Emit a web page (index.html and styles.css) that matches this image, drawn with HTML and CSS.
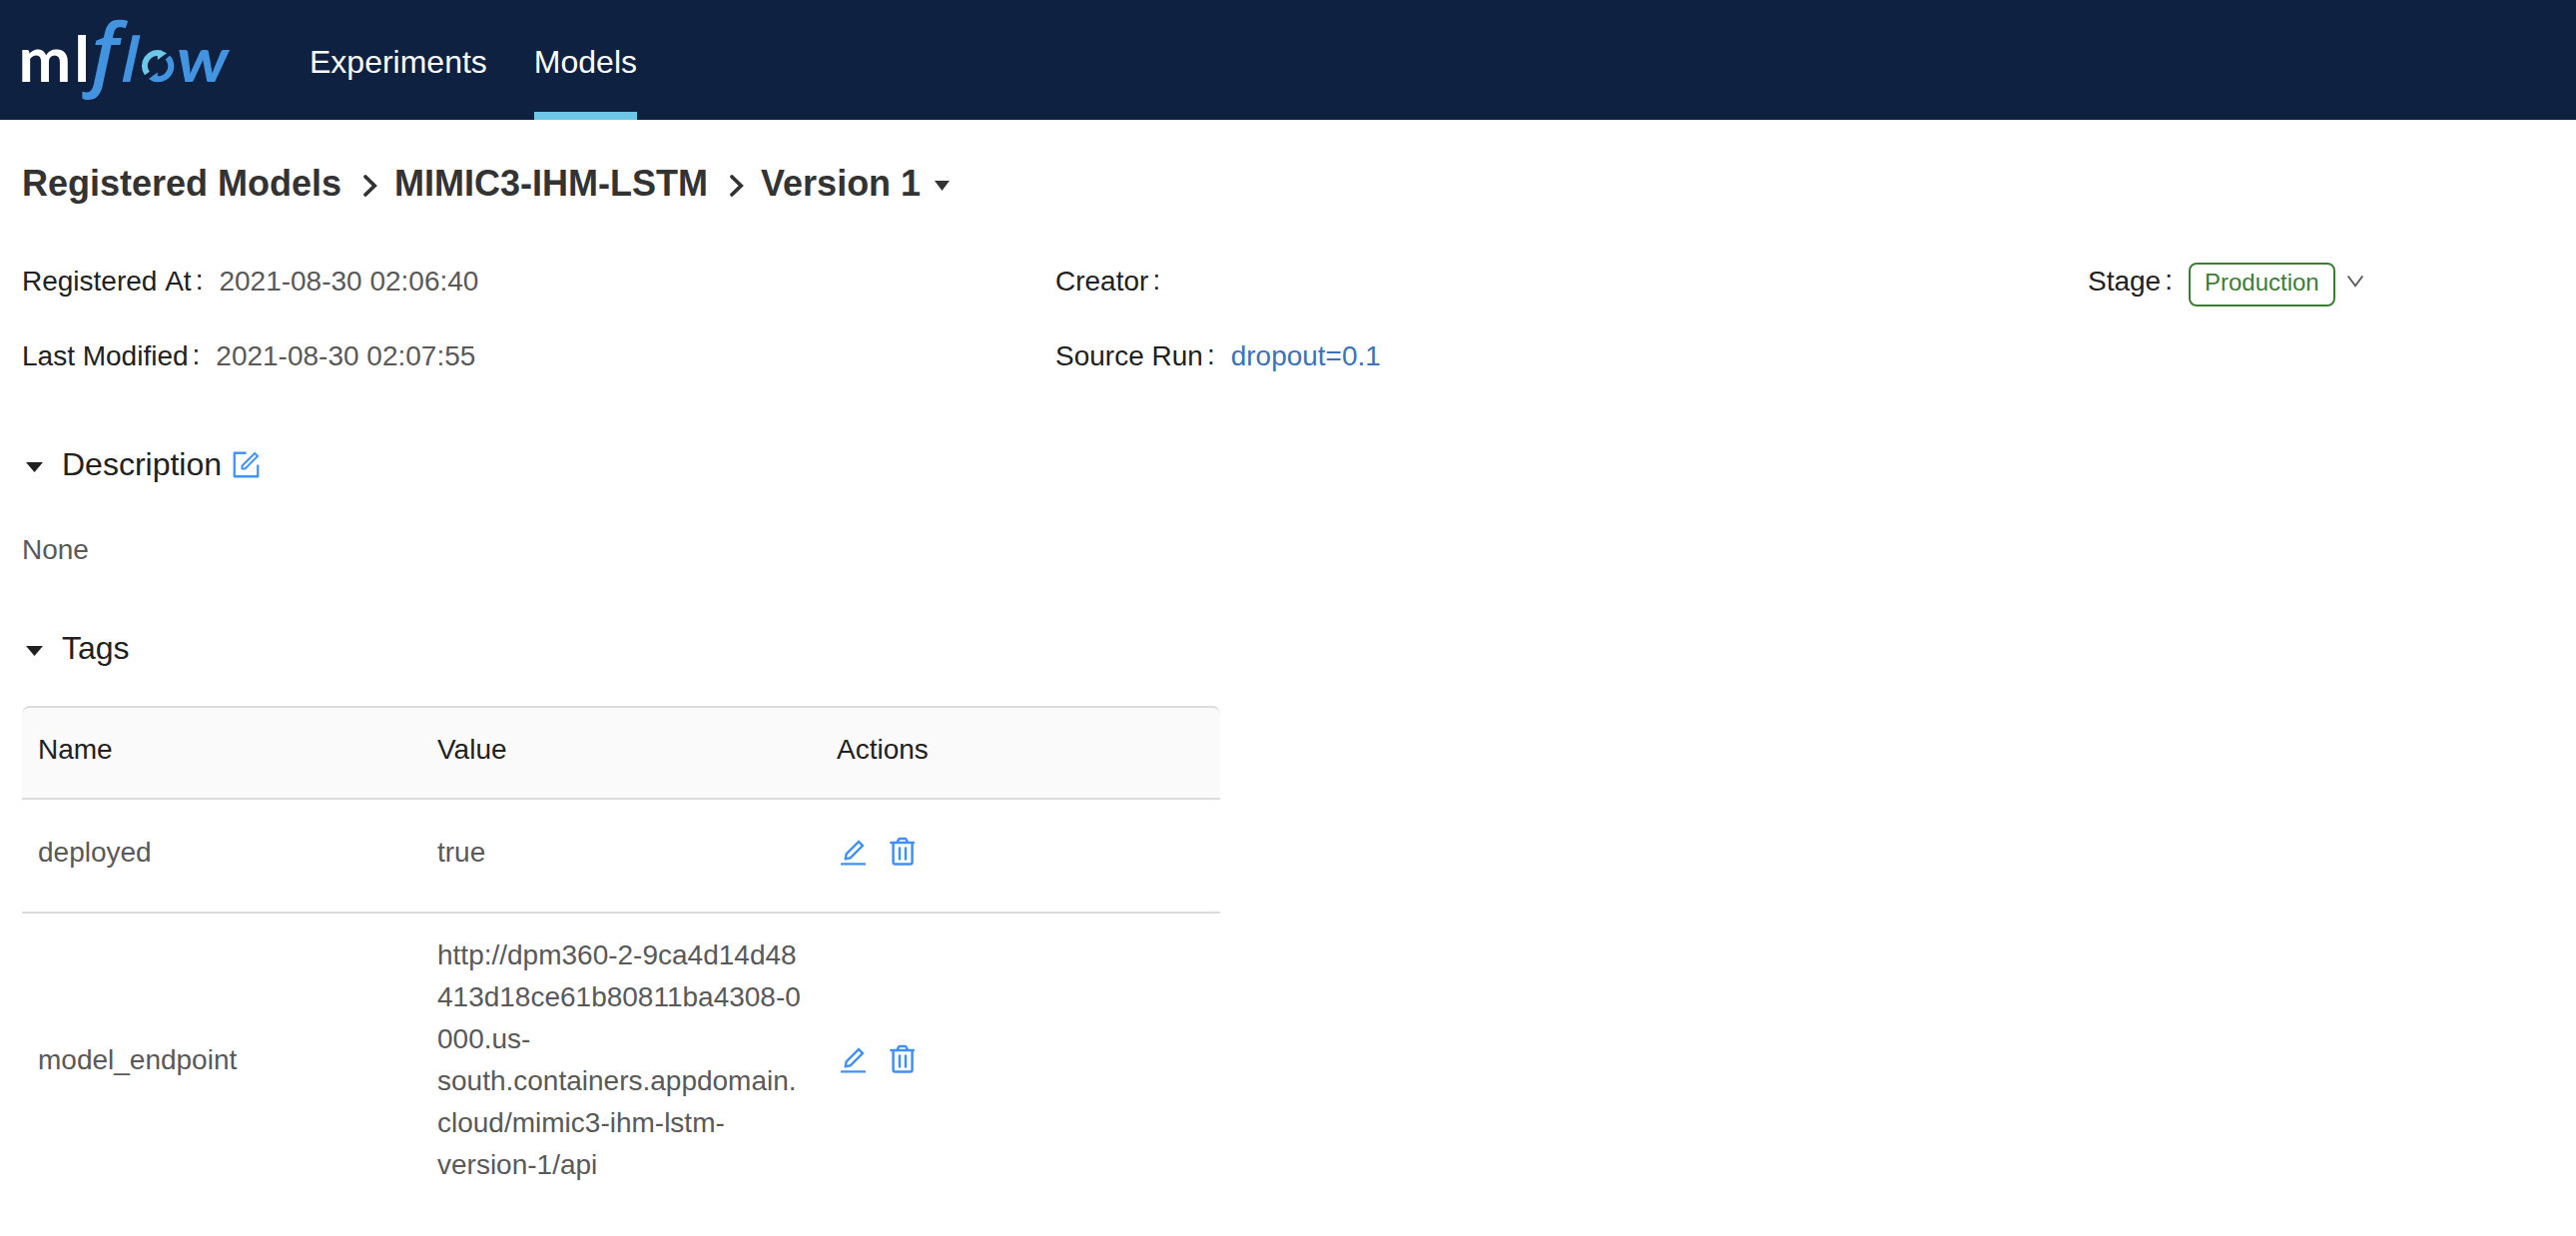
FILE: index.html
```html
<!DOCTYPE html>
<html lang="en">
<head>
<meta charset="utf-8">
<title>MLflow</title>
<link rel="stylesheet" href="styles.css">
</head>
<body>
<svg class="defs" width="0" height="0">
  <symbol id="edit" viewBox="0 0 1024 1024"><path d="M257.7 752c2 0 4-.2 6-.5L431.9 722c2-.4 3.9-1.3 5.3-2.8l423.9-423.9a9.96 9.96 0 0 0 0-14.1L694.9 114.9c-1.9-1.9-4.4-2.9-7.1-2.9s-5.2 1-7.1 2.9L256.8 538.8c-1.5 1.5-2.4 3.3-2.8 5.3l-29.5 168.2a33.5 33.5 0 0 0 9.4 29.8c6.6 6.4 14.9 9.9 23.8 9.9zm67.4-174.4L687.8 215l73.3 73.3-362.7 362.6-88.9 15.7 15.6-89zM880 836H144c-17.7 0-32 14.3-32 32v36c0 4.4 3.6 8 8 8h784c4.4 0 8-3.6 8-8v-36c0-17.7-14.3-32-32-32z"/></symbol>
  <symbol id="trash" viewBox="0 0 26 30"><path d="M1.4 6.1H23.9M3.6 6.1V25.4Q3.6 27.4 5.6 27.4H20.6Q22.6 27.4 22.6 25.4V6.1M7.6 5.7L8.8 3Q9.2 2 10.3 2H15.3Q16.4 2 16.8 3L18 5.7M10 11.4V22.4M16 11.4V22.4" fill="none" stroke="currentColor" stroke-width="2.5" stroke-linecap="round"/></symbol>
  <symbol id="chevron" viewBox="0 0 16 24"><path d="M3 3L12.2 12L3 21" fill="none" stroke="currentColor" stroke-width="3.8" stroke-linecap="round"/></symbol>
</svg>
<header class="header">
  <svg class="logo" width="240" height="120" viewBox="0 0 240 120" aria-label="mlflow">
    <text class="logo-ml" x="18.4" y="82">m</text>
    <text class="logo-ml" x="74.3" y="82">l</text>
    <text class="logo-f" x="91.3" y="81.2">f</text>
    <text class="logo-flow" x="0" y="0" transform="translate(121.2 82) skewX(-5.5)">l</text>
    <text class="logo-flow" x="177" y="82" textLength="52" lengthAdjust="spacingAndGlyphs">w</text>
    <path d="M147.4 73.6A13 13 0 0 1 161.2 53.4" class="arc-light"/>
    <path d="M161 50.4L167 53.3L157.8 60V52Z" class="tip-light"/>
    <path d="M167.9 57.5A13 13 0 0 1 152.7 78" class="arc-blue"/>
    <path d="M148.8 79L157.8 72.5V81L153 81Z" class="tip-blue"/>
  </svg>
  <nav class="nav">
    <a class="nav-link">Experiments</a>
    <a class="nav-link active">Models</a>
  </nav>
</header>
<main class="page">
  <h1 class="breadcrumb">
    <span>Registered Models</span>
    <svg class="chevron"><use href="#chevron"/></svg>
    <span>MIMIC3-IHM-LSTM</span>
    <svg class="chevron"><use href="#chevron"/></svg>
    <span>Version 1</span>
    <svg class="caret" viewBox="0 0 15 10"><path d="M0 0H15L7.5 10Z"/></svg>
  </h1>
  <dl class="meta">
    <div class="item"><dt>Registered At</dt><dd>2021-08-30 02:06:40</dd></div>
    <div class="item"><dt>Creator</dt><dd></dd></div>
    <div class="item"><dt>Stage</dt><dd class="stage"><span class="tag">Production</span><svg class="down" viewBox="0 0 16 12"><path d="M.7 .5L8 10.2L15.3 .5"/></svg></dd></div>
    <div class="item"><dt>Last Modified</dt><dd>2021-08-30 02:07:55</dd></div>
    <div class="item"><dt>Source Run</dt><dd><a class="link">dropout=0.1</a></dd></div>
  </dl>
  <section>
    <h2 class="title"><svg class="toggle" viewBox="0 0 17 10"><path d="M0 0H17L8.5 10Z"/></svg>Description
      <svg class="form" viewBox="0 0 1024 1024"><path d="M904 512h-56c-4.4 0-8 3.6-8 8v320H184V184h320c4.4 0 8-3.6 8-8v-56c0-4.4-3.6-8-8-8H144c-17.7 0-32 14.3-32 32v736c0 17.7 14.3 32 32 32h736c17.7 0 32-14.3 32-32V520c0-4.4-3.6-8-8-8z"/><path d="M355.9 534.9L354 653.8c-.1 8.9 7.1 16.2 16 16.2h.4l118-2.9c2-.1 4-.9 5.4-2.3l415.9-415c3.1-3.1 3.1-8.2 0-11.3L785.4 114.3c-1.6-1.6-3.6-2.3-5.7-2.3s-4.1.8-5.7 2.3l-415.8 415a8.3 8.3 0 0 0-2.3 5.6zm63.5 23.6L779.7 199l45.2 45.1-360.5 359.7-45.7 1.1.7-46.4z"/></svg></h2>
    <p class="empty">None</p>
  </section>
  <section>
    <h2 class="title tags"><svg class="toggle" viewBox="0 0 17 10"><path d="M0 0H17L8.5 10Z"/></svg>Tags</h2>
    <div class="table">
      <div class="row head"><div>Name</div><div>Value</div><div>Actions</div></div>
      <div class="row first"><div>deployed</div><div>true</div><div class="actions"><svg class="edit"><use href="#edit"/></svg><svg class="trash"><use href="#trash"/></svg></div></div>
      <div class="row last"><div>model_endpoint</div><div class="url">http://dpm360-2-9ca4d14d48<br>413d18ce61b80811ba4308-0<br>000.us-<br>south.containers.appdomain.<br>cloud/mimic3-ihm-lstm-<br>version-1/api</div><div class="actions"><svg class="edit"><use href="#edit"/></svg><svg class="trash"><use href="#trash"/></svg></div></div>
    </div>
  </section>
</main>
</body>
</html>
```
FILE: styles.css
```css
* { box-sizing: border-box; }
body { margin: 0; background: #fff; color: #595959; font: 28px/42px "Liberation Sans", Arial, sans-serif; overflow: hidden; }
svg { display: block; flex: none; }
.defs { position: absolute; }
.header { display: flex; height: 120px; background: #0e2140; }
.logo { font-family: Lato, sans-serif; }
.logo-ml { font-size: 63px; font-weight: 700; fill: #fff; }
.logo-f { font: italic 600 80px "Open Sans", sans-serif; fill: #4394e0; }
.logo-flow { font-size: 63px; font-weight: 700; font-style: italic; fill: #4394e0; }
.arc-light, .arc-blue { fill: none; stroke-width: 6; }
.arc-light { stroke: #6cc7e9; }
.arc-blue { stroke: #4394e0; }
.tip-light { fill: #6cc7e9; }
.tip-blue { fill: #4394e0; }
.nav { display: flex; gap: 47px; padding-left: 70px; }
.nav-link { padding-top: 41px; height: 120px; font-size: 32px; color: #fff; }
.active { border-bottom: 8px solid #6dc6e8; }
.page { padding: 0 22px; }
.breadcrumb { display: flex; align-items: center; height: 48px; margin: 40px 0 0; font-size: 36px; line-height: 48px; color: #333; }
.chevron { width: 16px; height: 24px; margin: 4px 16px 0 21px; }
.caret { width: 15px; height: 10px; margin: 4px 0 0 14px; fill: #333; }
.meta { display: grid; grid-template-columns: 1035px 1034px 440px; row-gap: 33px; margin: 53px 0 0; }
.item { display: flex; height: 42px; }
dt { color: #212121; font-kerning: none; }
dt::after { content: ":"; margin: 0 16px 0 4px; position: relative; top: -1px; }
dd { margin: 0; }
.stage { display: flex; align-items: flex-start; }
.tag { height: 44px; margin-top: 2px; padding: 0 14px; border: 2px solid #3c7d35; border-radius: 8px; color: #3c7d35; font-size: 24px; line-height: 36px; }
.down { width: 16px; height: 12px; margin: 15px 0 0 12px; fill: none; stroke: #555; stroke-width: 1.8; }
.link { color: #3a73b8; }
.title { display: flex; align-items: center; height: 44px; margin: 65px 0 0; font-size: 32px; font-weight: 400; color: #212121; }
.tags { margin-top: 55px; }
.toggle { width: 17px; height: 10px; margin: 5px 19px 0 4px; }
.toggle path { fill: #212121; }
.form { width: 33px; height: 33px; margin: 1px 0 0 8px; fill: #4394f7; }
.empty { margin: 43px 0 0; }
.table { width: 1200px; margin-top: 36px; }
.row { display: grid; grid-template-columns: 400px 400px 400px; align-items: center; border-bottom: 2px solid #dcdcdc; }
.row > div { padding-left: 16px; }
.head { height: 94px; padding-bottom: 6px; border-top: 2px solid #dcdcdc; border-radius: 8px 8px 0 0; background: #fafafa; color: #212121; }
.first { height: 114px; padding-bottom: 6px; }
.last { border: 0; padding: 21px 0; }
.actions { display: flex; color: #4090f7; }
.edit { width: 33px; height: 32px; fill: currentColor; }
.trash { width: 26px; height: 30px; margin-left: 20px; }
```
